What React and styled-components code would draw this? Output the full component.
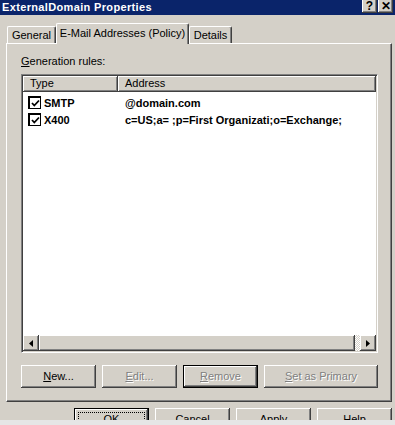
import React from 'react';
import styled, { createGlobalStyle, css } from 'styled-components';

const Global = createGlobalStyle`
  html, body { margin: 0; padding: 0; background: #D4D0C8; }
  body { font-family: "Liberation Sans", Arial, sans-serif; font-size: 11px; color: #000; }
  * { box-sizing: border-box; }
`;

const Window = styled.div`
  width: 395px;
  height: 425px;
  display: flex;
  flex-direction: column;
  overflow: hidden;
  background: #D4D0C8;
`;

const TitleBar = styled.div`
  height: 15px;
  flex: none;
  background: #0A246A;
  color: #fff;
  display: flex;
  align-items: flex-start;
  justify-content: space-between;
  padding: 0 2px 0 2px;
`;

const TitleText = styled.div`
  font-weight: bold;
  font-size: 11px;
  line-height: 13px;
  margin-top: 1px;
  letter-spacing: 0.35px;
`;

const CaptionButtons = styled.div`
  display: flex;
  margin-top: -1px;
`;

const CaptionButton = styled.div`
  width: 15px;
  height: 14px;
  background: #D4D0C8;
  color: #000;
  box-shadow: inset -1px -1px #404040, inset 1px 1px #fff, inset -2px -2px #808080;
  display: flex;
  align-items: center;
  justify-content: center;
  font-weight: bold;
  font-size: 12px;
  line-height: 12px;
  margin-left: ${p => (p.$gap ? '1px' : '0')};
`;

const TabRow = styled.div`
  display: flex;
  align-items: flex-end;
  height: 20px;
  margin-top: 8px;
  padding-left: 7px;
  flex: none;
  position: relative;
  z-index: 1;
`;

const Tab = styled.div`
  height: ${p => (p.$active ? '21px' : '17px')};
  margin-bottom: ${p => (p.$active ? '-1px' : '0')};
  width: ${p => p.$w}px;
  background: #D4D0C8;
  border-top: 1px solid #fff;
  border-left: 1px solid #fff;
  border-right: 1px solid #404040;
  box-shadow: inset -1px 0 #808080;
  border-radius: 2px 2px 0 0;
  padding-top: ${p => (p.$active ? '3px' : '2px')};
  text-align: center;
  line-height: 13px;
  white-space: nowrap;
`;

const Panel = styled.div`
  margin: 0 3px 0 6px;
  height: 359px;
  flex: none;
  border-top: 1px solid #fff;
  border-left: 1px solid #fff;
  border-right: 1px solid #404040;
  border-bottom: 1px solid #404040;
  box-shadow: inset -1px -1px #808080;
  padding: 11px 12px 12px 14px;
  display: flex;
  flex-direction: column;
`;

const Label = styled.div`
  line-height: 13px;
  height: 13px;
  margin-bottom: 6px;
`;

const U = styled.span`
  text-decoration: underline;
  text-underline-offset: 1px;
`;

const ListBox = styled.div`
  height: 279px;
  width: 357px;
  border-top: 1px solid #808080;
  border-left: 1px solid #808080;
  border-right: 1px solid #fff;
  border-bottom: 1px solid #fff;
  box-shadow: inset 1px 1px #404040, inset -1px -1px #D4D0C8;
  background: #fff;
  padding: 1px;
  display: flex;
  flex-direction: column;
`;

const Header = styled.div`
  display: flex;
  height: 16px;
  flex: none;
`;

const HeaderCell = styled.div`
  width: ${p => (p.$w ? `${p.$w}px` : 'auto')};
  flex: ${p => (p.$w ? 'none' : '1')};
  background: #D4D0C8;
  box-shadow: inset -1px -1px #404040, inset 1px 1px #fff, inset -2px -2px #808080;
  padding: 1px 0 0 7px;
  line-height: 13px;
`;

const Rows = styled.div`
  flex: 1;
  padding-top: 2px;
`;

const Row = styled.div`
  display: flex;
  height: 17px;
  align-items: center;
  font-weight: bold;
  white-space: nowrap;
`;

const TypeCell = styled.div`
  width: 95px;
  flex: none;
  display: flex;
  align-items: center;
  padding-left: 5px;
  gap: 3px;
`;

const AddrCell = styled.div`
  padding-left: 7px;
`;

const CheckBox = styled.span`
  width: 13px;
  height: 13px;
  flex: none;
  border: 2px solid #000;
  border-right-width: 1px;
  border-bottom-width: 1px;
  background: #fff;
  display: inline-flex;
  align-items: center;
  justify-content: center;
`;

const ScrollBar = styled.div`
  height: 16px;
  flex: none;
  display: flex;
`;

const ArrowButton = styled.div`
  width: 16px;
  height: 16px;
  flex: none;
  background: #D4D0C8;
  box-shadow: inset -1px -1px #404040, inset 1px 1px #fff, inset -2px -2px #808080;
  display: flex;
  align-items: center;
  justify-content: center;
`;

const Track = styled.div`
  flex: 1;
  display: flex;
  background: repeating-conic-gradient(#D4D0C8 0 25%, #fff 0 50%) 0 0 / 2px 2px;
  padding-right: 5px;
`;

const Thumb = styled.div`
  flex: 1;
  background: #D4D0C8;
  box-shadow: inset -1px -1px #404040, inset 1px 1px #fff, inset -2px -2px #808080;
`;

const ButtonRow = styled.div`
  display: flex;
  gap: 6px;
  margin-top: 12px;
`;

const Button = styled.div`
  width: ${p => p.$w || 75}px;
  height: 23px;
  flex: none;
  background: #D4D0C8;
  display: flex;
  align-items: center;
  justify-content: center;
  position: relative;
  line-height: 13px;
  box-shadow: inset -1px -1px #404040, inset 1px 1px #fff, inset -2px -2px #808080;
  ${p => p.$default && css`
    box-shadow: inset 0 0 0 1px #000, inset -2px -2px #404040, inset 2px 2px #fff, inset -3px -3px #808080;
  `}
  ${p => p.$disabled && css`
    color: #808080;
    text-shadow: 1px 1px 0 #fff;
  `}
`;

const FocusRect = styled.span`
  position: absolute;
  inset: 4px;
  border: 1px dotted #000;
  pointer-events: none;
`;

const DialogButtons = styled.div`
  height: 12px;
  flex: none;
  margin-top: 6px;
  overflow: hidden;
  display: flex;
  justify-content: flex-end;
  align-items: flex-start;
  gap: 6px;
  padding-right: 3px;
`;

const BottomStrip = styled.div`
  flex: 1;
  background: #E6E6E6;
`;

const Check = () => (
  <svg width="9" height="9" viewBox="0 0 9 9">
    <path d="M1 4 L3.3 6.5 L8 1.5" fill="none" stroke="#000" strokeWidth="1.8" />
  </svg>
);

const LeftArrow = () => (
  <svg width="4" height="7" viewBox="0 0 4 7"><path d="M4 0 L0 3.5 L4 7 Z" fill="#000" /></svg>
);
const RightArrow = () => (
  <svg width="4" height="7" viewBox="0 0 4 7"><path d="M0 0 L4 3.5 L0 7 Z" fill="#000" /></svg>
);

const rules = [
  { type: 'SMTP', addr: '@domain.com' },
  { type: 'X400', addr: 'c=US;a= ;p=First Organizati;o=Exchange;' },
];

export default function App() {
  return (
    <>
      <Global />
      <Window>
        <TitleBar>
          <TitleText>ExternalDomain Properties</TitleText>
          <CaptionButtons>
            <CaptionButton>?</CaptionButton>
            <CaptionButton $gap>✕</CaptionButton>
          </CaptionButtons>
        </TitleBar>
        <TabRow>
          <Tab $w={49}>General</Tab>
          <Tab $w={133} $active>E-Mail Addresses (Policy)</Tab>
          <Tab $w={43}>Details</Tab>
        </TabRow>
        <Panel>
          <Label><U>G</U>eneration rules:</Label>
          <ListBox>
            <Header>
              <HeaderCell $w={95}>Type</HeaderCell>
              <HeaderCell>Address</HeaderCell>
            </Header>
            <Rows>
              {rules.map(r => (
                <Row key={r.type}>
                  <TypeCell>
                    <CheckBox><Check /></CheckBox>
                    {r.type}
                  </TypeCell>
                  <AddrCell>{r.addr}</AddrCell>
                </Row>
              ))}
            </Rows>
            <ScrollBar>
              <ArrowButton><LeftArrow /></ArrowButton>
              <Track><Thumb /></Track>
              <ArrowButton><RightArrow /></ArrowButton>
            </ScrollBar>
          </ListBox>
          <ButtonRow>
            <Button><span><U>N</U>ew...</span></Button>
            <Button $disabled><span><U>E</U>dit...</span></Button>
            <Button $disabled $default><span><U>R</U>emove</span></Button>
            <Button $disabled $w={114}><span><U>S</U>et as Primary</span></Button>
          </ButtonRow>
        </Panel>
        <DialogButtons>
          <Button $default>OK<FocusRect /></Button>
          <Button>Cancel</Button>
          <Button>Apply</Button>
          <Button>Help</Button>
        </DialogButtons>
        <BottomStrip />
      </Window>
    </>
  );
}
